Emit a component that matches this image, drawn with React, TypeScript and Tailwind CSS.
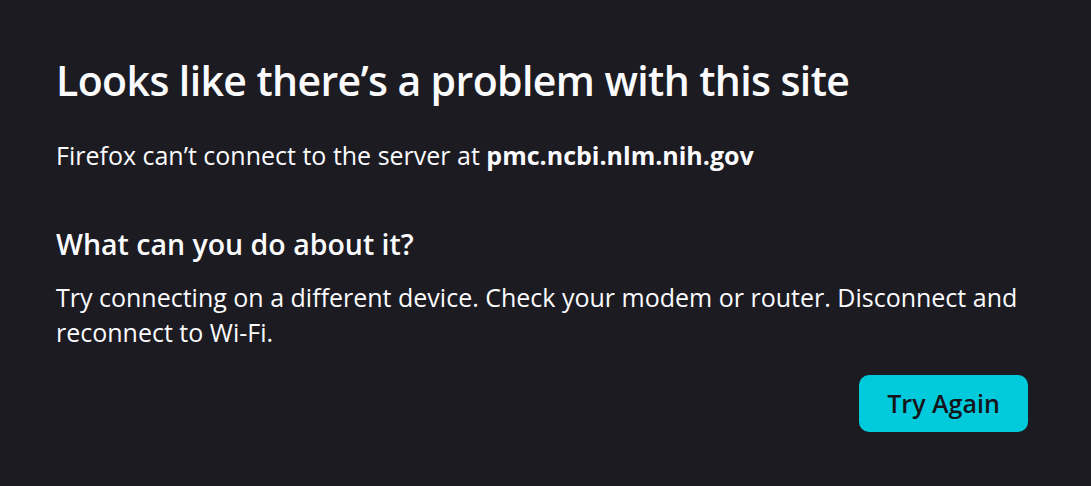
export default function App() {
  return (
    <div
      className="min-h-screen w-full bg-[#1c1b22] text-[#fbfbfe]"
      style={{ fontFamily: '"Open Sans", "Noto Sans", sans-serif' }}
    >
      <div className="w-[972px] pl-[56px] pt-[54px] box-content">
        <h1 className="text-[41px] leading-[52px] font-semibold tracking-[-0.6px]">
          Looks like there’s a problem with this site
        </h1>
        <p className="mt-[31px] text-[25px] leading-[36px]">
          Firefox can’t connect to the server at <strong className="font-bold">pmc.ncbi.nlm.nih.gov</strong>
        </p>
        <h2 className="mt-[51px] text-[28.5px] leading-[40px] font-semibold">What can you do about it?</h2>
        <p className="mt-[16px] text-[25px] leading-[35px]">
          Try connecting on a different device. Check your modem or router. Disconnect and reconnect to Wi-Fi.
        </p>
        <div className="flex justify-end mt-[25px]">
          <button className="h-[57px] w-[169px] rounded-[10px] bg-[#00cadb] text-[#15141a] text-[25px] font-semibold">
            Try Again
          </button>
        </div>
      </div>
    </div>
  )
}
